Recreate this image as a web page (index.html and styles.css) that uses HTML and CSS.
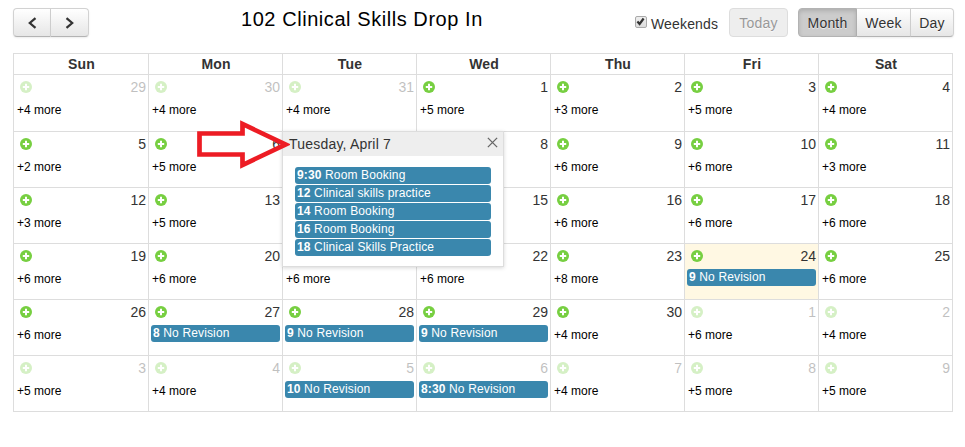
FILE: index.html
```html
<!DOCTYPE html>
<html lang="en">
<head>
<meta charset="utf-8">
<title>102 Clinical Skills Drop In</title>
<link rel="stylesheet" href="styles.css">
</head>
<body>
<svg width="0" height="0" class="defs"><symbol id="plus" viewBox="0 0 12 12"><circle cx="6" cy="6" r="6"/><path d="M6 2.8v6.4M2.8 6h6.4" stroke="#fff" stroke-width="2"/></symbol></svg>
<header class="toolbar">
  <div class="group nav">
    <button class="btn" aria-label="Previous"><svg width="10" height="12" viewBox="0 0 10 12"><path d="M8.5 1.2 2.8 6 8.5 10.8"/></svg></button><button class="btn" aria-label="Next"><svg width="10" height="12" viewBox="0 0 10 12"><path d="M1.5 1.2 7.2 6 1.5 10.8"/></svg></button>
  </div>
  <h1>102 Clinical Skills Drop In</h1>
  <div class="weekends"><span class="check"><svg width="11" height="11" viewBox="0 0 11 11"><path d="M2.4 5.5 4.6 8 8.6 2.5"/></svg></span><span>Weekends</span></div>
  <button class="btn today-btn">Today</button>
  <div class="group views">
    <button class="btn active">Month</button><button class="btn">Week</button><button class="btn">Day</button>
  </div>
</header>
<main class="calendar" id="calendar"></main>
<section class="popover">
  <div class="pop-head"><span>Tuesday, April 7</span><svg width="11" height="11" viewBox="0 0 10 10"><path d="M.8.8l8.4 8.4M9.2.8.8 9.2"/></svg></div>
  <div class="pop-body">
    <div class="event"><b>9:30</b> Room Booking</div>
    <div class="event"><b>12</b> Clinical skills practice</div>
    <div class="event"><b>14</b> Room Booking</div>
    <div class="event"><b>16</b> Room Booking</div>
    <div class="event"><b>18</b> Clinical Skills Practice</div>
  </div>
</section>
<svg class="arrow" width="100" height="56" viewBox="0 0 100 56"><path class="inside" d="M9.5 15.5H52.5V6L80 19V34L52.5 47V36.5H9.5Z"/><path d="M9.5 15.5H52.5V6L95.5 26.5 52.5 47V36.5H9.5Z"/></svg>
<script src="calendar.js"></script>
</body>
</html>
```
FILE: styles.css
```css
* { box-sizing: border-box; }
body { margin: 0; width: 965px; height: 447px; overflow: hidden; position: relative; background: #fff; color: #333; font: 14px/20px "Liberation Sans", Arial, sans-serif; }
.defs { position: absolute; }
.toolbar { display: flex; height: 53px; padding: 8px 11px 0 13px; }
.toolbar > * { flex: none; }
.group { display: flex; }
.btn { height: 29px; padding: 0; border: 1px solid #d2d2d2; border-bottom-color: #b3b3b3; border-radius: 4px; background: linear-gradient(#fff, #e6e6e6); box-shadow: 0 1px 2px rgba(0,0,0,.08); color: #333; font: 14px/20px "Liberation Sans", Arial, sans-serif; text-shadow: 0 1px 1px rgba(255,255,255,.75); letter-spacing: .2px; }
.group .btn + .btn { border-left: 0; border-radius: 0; }
.group .btn:first-child { border-radius: 4px 0 0 4px; }
.group .btn:last-child { border-radius: 0 4px 4px 0; }
.nav .btn { width: 38px; display: flex; align-items: center; justify-content: center; }
.nav svg { fill: none; stroke: #333; stroke-width: 2.2; }
h1 { margin: 0 0 0 152px; width: 394px; color: #000; font-size: 20px; line-height: 22px; font-weight: 400; letter-spacing: .56px; white-space: nowrap; }
.weekends { display: flex; width: 94px; padding-top: 6px; gap: 4px; letter-spacing: .15px; }
.check { width: 12px; height: 12px; margin-top: 2px; border: 1px solid #aaa; border-radius: 2px; background: linear-gradient(#eee, #ddd); display: flex; flex: none; }
.check svg { fill: none; stroke: #333; stroke-width: 2.2; margin: -1px; }
.today-btn { width: 59px; margin-right: 10px; color: #999; background: #eee; border-color: #ddd; box-shadow: none; }
.views .btn:nth-child(1) { width: 59px; }
.views .btn:nth-child(2) { width: 54px; }
.views .btn:nth-child(3) { width: 43px; }
.views .btn.active { background: #ccc; border-color: #b3b3b3; box-shadow: inset 0 2px 4px rgba(0,0,0,.15); }
.calendar { display: grid; width: 940px; margin-left: 13px; grid-template-columns: 136px repeat(6, 134px); grid-template-rows: 21px 57px repeat(5, 56px); border-top: 1px solid #ddd; }
.calendar > div { border: solid #ddd; border-width: 0 1px 1px 0; }
.calendar > div:nth-child(7n+1) { border-left-width: 1px; }
.calendar > .dow { padding-left: 1px; font-weight: 700; text-align: center; line-height: 20px; letter-spacing: .15px; }
.day { padding: 0 2px; }
.top { display: flex; justify-content: space-between; align-items: center; height: 25px; padding: 0 0 1px 4px; }
.top svg { width: 12px; height: 12px; fill: #77cf41; }
.out .top { opacity: .3; }
.more { display: block; padding: 3px 0 0 1px; color: #000; font-size: 12px; line-height: 14px; }
.current { background: #fff8e3; }
.event { height: 17px; padding: 0 2px; overflow: hidden; border-radius: 3px; background: #3a87ad; color: #fff; font-size: 12px; line-height: 16px; letter-spacing: .14px; white-space: nowrap; }
.popover { position: absolute; left: 282px; top: 131px; width: 222px; height: 136px; border: 1px solid #ddd; background: #fff; box-shadow: 0 1px 4px rgba(0,0,0,.16); }
.pop-head { display: flex; justify-content: space-between; height: 24px; padding: 2px 5px 0 6px; background: #eee; letter-spacing: .2px; }
.pop-head svg { margin-top: 3px; fill: none; stroke: #666; stroke-width: 1.2; }
.pop-body { display: flex; flex-direction: column; gap: 1px; padding: 11px 12px; }
.arrow { position: absolute; left: 190px; top: 118px; fill: none; stroke: #ed1c24; stroke-width: 4.7; }
.arrow .inside { fill: #fff; stroke: none; }
```
FILE: calendar.js
```js
const calendar = document.getElementById('calendar');
const names = ['Sun', 'Mon', 'Tue', 'Wed', 'Thu', 'Fri', 'Sat'];
// Number: count of further events; string: "time|title"; null: no entry.
const entries = [
  4, 4, 4, 5, 3, 5, 4,
  2, 5, null, null, 6, 6, 3,
  3, 5, null, null, 6, 6, 6,
  6, 6, 6, 6, 8, '9|No Revision', 6,
  6, '8|No Revision', '9|No Revision', '9|No Revision', 4, 6, 4,
  5, 4, '10|No Revision', '8:30|No Revision', 4, 5, 5
];
// Days whose header lies under the open popover.
const covered = [9, 16, 23];
let html = names.map(n => `<div class="dow">${n}</div>`).join('');
entries.forEach((entry, i) => {
  const date = new Date(2015, 2, 29 + i);
  const day = date.getDate();
  const out = date.getMonth() !== 3;
  const cls = 'day' + (out ? ' out' : '') + (!out && day === 24 ? ' current' : '');
  let content = '';
  if (typeof entry === 'number') content = `<span class="more">+${entry} more</span>`;
  else if (entry) {
    const [time, title] = entry.split('|');
    content = `<div class="event"><b>${time}</b> ${title}</div>`;
  }
  const head = covered.includes(i) ? '' : `<svg><use href="#plus"/></svg><span>${day}</span>`;
  html += `<div class="${cls}"><div class="top">${head}</div>${content}</div>`;
});
calendar.innerHTML = html;
```
